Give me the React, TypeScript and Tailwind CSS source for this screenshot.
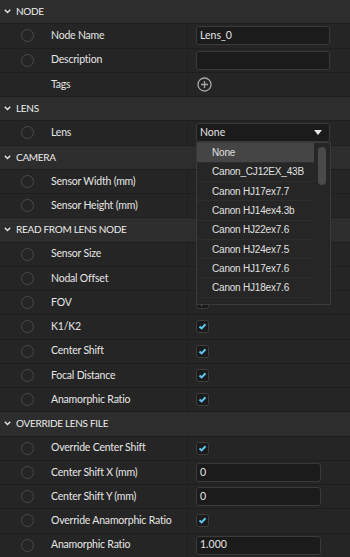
import React from 'react';

type Row =
  | { kind: 'header'; title: string }
  | { kind: 'row'; label: string; noDot?: boolean; control?: 'input' | 'check' | 'tags' | 'select' | 'none'; value?: string; short?: boolean };

const rows: Row[] = [
  { kind: 'header', title: 'NODE' },
  { kind: 'row', label: 'Node Name', control: 'input', value: 'Lens_0' },
  { kind: 'row', label: 'Description', control: 'input', value: '' },
  { kind: 'row', label: 'Tags', noDot: true, control: 'tags' },
  { kind: 'header', title: 'LENS' },
  { kind: 'row', label: 'Lens', control: 'select' },
  { kind: 'header', title: 'CAMERA' },
  { kind: 'row', label: 'Sensor Width (mm)', control: 'none' },
  { kind: 'row', label: 'Sensor Height (mm)', control: 'none' },
  { kind: 'header', title: 'READ FROM LENS NODE' },
  { kind: 'row', label: 'Sensor Size', control: 'check' },
  { kind: 'row', label: 'Nodal Offset', control: 'check' },
  { kind: 'row', label: 'FOV', control: 'check' },
  { kind: 'row', label: 'K1/K2', control: 'check' },
  { kind: 'row', label: 'Center Shift', control: 'check' },
  { kind: 'row', label: 'Focal Distance', control: 'check' },
  { kind: 'row', label: 'Anamorphic Ratio', control: 'check' },
  { kind: 'header', title: 'OVERRIDE LENS FILE' },
  { kind: 'row', label: 'Override Center Shift', control: 'check' },
  { kind: 'row', label: 'Center Shift X (mm)', control: 'input', value: '0', short: true },
  { kind: 'row', label: 'Center Shift Y (mm)', control: 'input', value: '0', short: true },
  { kind: 'row', label: 'Override Anamorphic Ratio', control: 'check' },
  { kind: 'row', label: 'Anamorphic Ratio', control: 'input', value: '1.000', short: true },
];

const lenses = [
  'None',
  'Canon_CJ12EX_43B',
  'Canon HJ17ex7.7',
  'Canon HJ14ex4.3b',
  'Canon HJ22ex7.6',
  'Canon HJ24ex7.5',
  'Canon HJ17ex7.6',
  'Canon HJ18ex7.6',
];

function Dot() {
  return <div className="w-[13px] h-[13px] rounded-full border-[1.5px] border-[#4a4a4a]" />;
}

function Check() {
  return (
    <svg width="13" height="13" viewBox="0 0 13 13">
      <rect x="0.5" y="0.5" width="12" height="12" rx="2" fill="#1b1b1b" stroke="#3e3e3e" />
      <path d="M3.5 6.5 L5.6 8.4 L9.5 4.2" fill="none" stroke="#5cc8f2" strokeWidth="2" />
    </svg>
  );
}

function Control({ row }: { row: Extract<Row, { kind: 'row' }> }) {
  switch (row.control) {
    case 'input':
      return (
        <div
          className={`h-[19px] ${row.short ? 'w-[125px]' : 'w-[134px]'} rounded-[3px] bg-[#1b1b1b] border border-[#3a3a3a] px-[3px] flex items-center text-[10.5px] text-[#e2e2e2]`}
        >
          {row.value}
        </div>
      );
    case 'check':
      return <Check />;
    case 'tags':
      return (
        <svg width="15" height="15" viewBox="0 0 15 15" className="ml-[1px]">
          <circle cx="7.5" cy="7.5" r="6.5" fill="none" stroke="#a8a8a8" strokeWidth="1.3" />
          <path d="M7.5 4 V11 M4 7.5 H11" stroke="#a8a8a8" strokeWidth="1.3" />
        </svg>
      );
    case 'select':
      return (
        <div className="relative">
          <div className="h-[19px] w-[134px] rounded-[3px] bg-[#1b1b1b] border border-[#3a3a3a] pl-[3px] pr-[7px] flex items-center justify-between text-[10.5px] text-[#e2e2e2]">
            <span>None</span>
            <svg width="8" height="5" viewBox="0 0 8 5">
              <path d="M0 0 H8 L4 5 Z" fill="#e6e6e6" />
            </svg>
          </div>
          <div className="absolute left-0 top-[19px] z-10 w-[135px] h-[163px] bg-[#262626] border border-[#3a3a3a] flex">
            <div className="flex-1 flex flex-col">
              {lenses.map((l, i) => (
                <div
                  key={l}
                  className={`h-[19.3px] shrink-0 flex items-center pl-[15px] text-[10px] tracking-[-0.2px] text-[#e0e0e0] border-b border-[#2e2e2e] ${i === 0 ? 'bg-[#454545]' : ''}`}
                  style={{ fontFamily: '"Liberation Sans", Arial, sans-serif' }}
                >
                  {l}
                </div>
              ))}
            </div>
            <div className="w-[16px] pt-[4px] flex justify-center">
              <div className="w-[8px] h-[38px] rounded-full bg-[#4a4a4a]" />
            </div>
          </div>
        </div>
      );
    default:
      return null;
  }
}

export default function App() {
  return (
    <div
      className="w-[350px] h-[557px] overflow-hidden bg-[#252525] text-[#e0e0e0]"
      style={{ fontFamily: 'Lato, "Open Sans", sans-serif' }}
    >
      {rows.map((r, i) =>
        r.kind === 'header' ? (
          <div key={i} className="h-[24.25px] bg-[#2d2d2d] border-b border-[#1e1e1e] flex items-center gap-[5px] pl-[4px]">
            <svg width="7" height="5" viewBox="0 0 7 5">
              <path d="M0.8 0.8 L3.5 3.6 L6.2 0.8" fill="none" stroke="#e6e6e6" strokeWidth="1.4" />
            </svg>
            <span className="text-[10px] text-[#ececec] tracking-[-0.3px]">{r.title}</span>
          </div>
        ) : (
          <div key={i} className={`h-[24.25px] flex border-b border-[#1e1e1e] ${r.control === 'select' ? 'relative z-10' : ''}`}>
            <div className="w-[188px] shrink-0 border-r border-[#1e1e1e] flex items-center pl-[21px]">
              <div className="w-[30px]">{!r.noDot && <Dot />}</div>
              <span className="text-[10.5px] text-[#e6e6e6] whitespace-nowrap tracking-[-0.2px]">{r.label}</span>
            </div>
            <div className="flex-1 flex items-center pl-[8px]">
              <Control row={r} />
            </div>
          </div>
        )
      )}
    </div>
  );
}
